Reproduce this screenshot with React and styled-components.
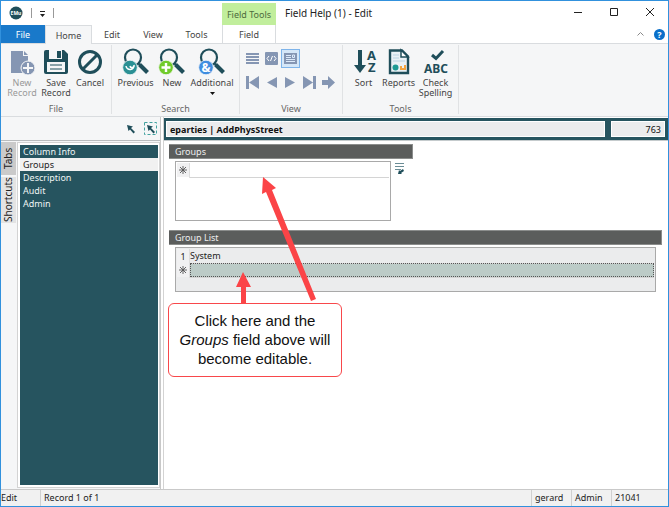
import styled, { createGlobalStyle } from "styled-components";

const INK = "#1f4e5a";
const TEAL = "#26545f";
const MUTED = "#8596b3";
const LINE = "#d9dcdf";

const GlobalStyle = createGlobalStyle`
  * {
    box-sizing: border-box;
  }
  body {
    margin: 0;
    font-family: "Noto Sans", "Open Sans", sans-serif;
    font-size: 9px;
    line-height: 11px;
    color: #444;
  }
  button,
  input {
    margin: 0;
    padding: 0;
    border: 0;
    background: none;
    font: inherit;
    color: inherit;
  }
  svg {
    display: block;
  }
`;

const Window = styled.div`
  display: flex;
  flex-direction: column;
  min-height: 100vh;
  border: 1px solid #3191dd;
  background: #fff;
`;

// Title bar
const TitleBar = styled.header`
  display: flex;
  height: 24px;
`;

const QuickAccess = styled.div`
  display: flex;
  align-items: center;
  gap: 8px;
  width: 221px;
  padding-left: 8px;
`;

const Divider = styled.span`
  width: 1px;
  height: 10px;
  background: #999;
`;

const ContextLabel = styled.div`
  width: 54px;
  margin-top: 2px;
  padding-top: 6px;
  background: #c1ee9c;
  text-align: center;
  color: #4d6b3c;
`;

const Title = styled.h1`
  flex: 1;
  margin: 0;
  padding: 6px 0 0 9px;
  font-size: 10px;
  line-height: 12px;
  font-weight: 400;
  color: #222;
`;

const WindowButton = styled.button`
  display: grid;
  place-items: center;
  width: 36px;
  height: 22px;
`;

// Ribbon tabs
const TabRow = styled.nav`
  display: flex;
  height: 19px;
  border-bottom: 1px solid ${LINE};
`;

const MainTabs = styled.div`
  display: flex;
  width: 221px;
`;

const Tab = styled.button`
  width: ${(p) => p.$width}px;
  height: ${(p) => (p.$active ? 19 : 18)}px;
  border: solid ${LINE};
  border-width: ${(p) => (p.$active ? "1px 1px 0" : p.$context ? "0 1px" : "0")};
  background: ${(p) => (p.$file ? "#1979ca" : p.$active ? "#f5f6f7" : "#fff")};
  color: ${(p) => (p.$file ? "#fff" : "#444")};
`;

const TabTools = styled.div`
  display: flex;
  flex: 1;
  align-items: center;
  justify-content: flex-end;
  gap: 10px;
  padding-right: 3px;
`;

const Ribbon = styled.div`
  display: flex;
  height: 73px;
  border-bottom: 1px solid ${LINE};
  background: #f5f6f7;
`;

const RibbonGroup = styled.section`
  display: flex;
  flex-direction: column;
  justify-content: space-between;
  width: ${(p) => p.$width}px;
  margin: 1px 0 2px;
  padding-top: 3px;
  border-right: 1px solid #e0e2e4;
`;

const GroupTools = styled.div`
  display: flex;
  justify-content: center;
`;

const GroupName = styled.h2`
  margin: 0;
  font-size: 9px;
  font-weight: 400;
  text-align: center;
  color: #666;
`;

const ToolButton = styled.button`
  display: flex;
  flex-direction: column;
  align-items: center;
  width: ${(p) => p.$width}px;
  line-height: 10px;
  color: ${(p) => (p.$disabled ? "#999" : "#444")};

  svg {
    flex: none;
    margin-bottom: 2px;
  }
`;

const ViewTools = styled.div`
  display: grid;
  gap: 5px;
  padding: 1px 0 0 3px;
`;

const ViewRow = styled.div`
  display: flex;
`;

const ViewButton = styled.button`
  display: grid;
  place-items: center;
  width: 19px;
  height: 19px;
  border: 1px solid ${(p) => (p.$on ? "#7eb4ea" : "transparent")};
  background: ${(p) => (p.$on ? "#d5e7f8" : "none")};
`;

// Body
const Body = styled.div`
  display: flex;
  flex: 1;
`;

const Sidebar = styled.aside`
  display: flex;
  flex-direction: column;
  width: 160px;
  border-right: 1px solid #c8c8c8;
  background: #f5f6f7;
`;

const SidebarTools = styled.div`
  display: flex;
  align-items: center;
  justify-content: flex-end;
  gap: 7px;
  height: 24px;
  padding-right: 3px;
  border-bottom: 1px solid #b9bcbe;
`;

const SidebarMain = styled.div`
  display: flex;
  flex: 1;
`;

const SideTabs = styled.div`
  width: 16px;
  padding-top: 1px;
`;

const SideTab = styled.button`
  width: 15px;
  height: ${(p) => p.$height}px;
  background: ${(p) => (p.$active ? "#cacaca" : "#e3e3e3")};
  color: #222;
  font-size: 10px;
  line-height: 15px;
  writing-mode: vertical-rl;
  transform: rotate(180deg);
`;

const PageFrame = styled.div`
  display: flex;
  flex: 1;
  margin: 1px 0;
  padding: 2px 1px 2px 2px;
  border: 1px solid #d3d3d3;
  background: #fff;
`;

const PageList = styled.div`
  flex: 1;
  background: ${TEAL};
`;

const PageItem = styled.button`
  display: block;
  width: 100%;
  height: 13px;
  padding-left: 3px;
  background: ${(p) => (p.$active ? "#f1f1f1" : "transparent")};
  color: ${(p) => (p.$active ? "#222" : "#eef4f5")};
  text-align: left;
`;

const Main = styled.main`
  position: relative;
  flex: 1;
  margin-left: 2px;
  border-left: 1px solid #d3d3d3;
`;

const RecordBar = styled.div`
  display: flex;
  gap: 6px;
  height: 23px;
  margin-top: 1px;
  padding: 3px 3px 3px 2px;
  border-bottom: 1px solid #c5cbcd;
  background: ${TEAL};
`;

const RecordField = styled.input`
  width: ${(p) => p.$width};
  min-width: 0;
  padding: 0 3px;
  border: 1px solid #fff;
  background: #ebeced;
  color: #111;
  font-weight: ${(p) => (p.$strong ? 700 : 400)};
  text-align: ${(p) => (p.$strong ? "left" : "right")};
`;

const Form = styled.div`
  padding: 3px 6px 0 5px;
`;

const Block = styled.section`
  margin-bottom: 9px;
`;

const BlockTitle = styled.h3`
  width: ${(p) => p.$width};
  margin: 0 0 2px;
  padding-left: 6px;
  border: 1px solid #8b8d8c;
  border-left: 0;
  background: #5b5d5c;
  color: #eee;
  font-size: 9px;
  font-weight: 400;
  line-height: 13px;
`;

const FieldRow = styled.div`
  display: flex;
  align-items: flex-start;
  gap: 4px;
  padding: 0 6px;
`;

const GridFrame = styled.div`
  width: ${(p) => p.$width};
  height: ${(p) => p.$height}px;
  padding: 1px;
  border: 1px solid #a9a9a9;
  background: ${(p) => (p.$locked ? "#ebeced" : "#fff")};
`;

const Grid = styled.table`
  width: 100%;
  border-collapse: collapse;

  th,
  td {
    height: 14px;
    padding: 0;
    color: #222;
    font-weight: 400;
  }
  th {
    width: 12px;
    border-right: 1px solid #ddd;
    background: #f1f1f2;
    text-align: center;
  }
  td {
    border-bottom: 1px solid #d4d4d4;
  }
  input {
    display: block;
    width: 100%;
    height: 12px;
    outline: none;
  }
`;

const PickedCell = styled.td`
  background: #bccbc7;
  outline: 1px dotted #555;
  outline-offset: -1px;
`;

const IconButton = styled.button`
  padding-top: 1px;
`;

const Arrows = styled.svg`
  position: absolute;
  top: 0;
  left: 0;
`;

const Callout = styled.p`
  position: absolute;
  top: 186px;
  left: 4px;
  width: 174px;
  margin: 0;
  padding: 7px 4px 8px;
  border: 1px solid #f8484b;
  border-radius: 6px;
  background: #fff;
  color: #111;
  font-family: "Liberation Sans", Arial, sans-serif;
  font-size: 15px;
  line-height: 19px;
  text-align: center;
`;

const StatusBar = styled.footer`
  display: flex;
  height: 17px;
  border-top: 1px solid #c9c9c9;
  background: #f1f1f1;
  color: #222;
  line-height: 16px;
`;

const StatusCell = styled.span`
  flex: ${(p) => (p.$width ? "none" : 1)};
  width: ${(p) => (p.$width ? p.$width + "px" : "auto")};
  padding-left: ${(p) => (p.$first ? 0 : 3)}px;
  border-left: ${(p) => (p.$first ? 0 : 1)}px solid #d0d0d0;
`;

// Icons
const Icon = ({ children }) => (
  <svg width="28" height="28" viewBox="0 0 28 28" fill="none" aria-hidden="true">
    {children}
  </svg>
);

const NewRecordIcon = () => (
  <Icon>
    <path d="M3 3h12v5h5v17H3z" fill={MUTED} />
    <path d="M16 3l4 4h-4z" fill={MUTED} />
    <circle cx="20" cy="20" r="7" fill={MUTED} stroke="#f5f6f7" />
    <path d="M20 15v10M15 20h10" stroke="#f5f6f7" strokeWidth="2" />
  </Icon>
);

const SaveIcon = () => (
  <Icon>
    <path d="M2 4q0-2 2-2h18l4 4v18q0 2-2 2H4q-2 0-2-2z" fill={INK} />
    <path d="M7 2h13v9H7z" fill="#f5f6f7" />
    <path d="M15 3h4v7h-4z" fill={INK} />
    <path d="M5 14h18v10H5z" fill="#f5f6f7" />
    <path d="M8 17h12M8 21h12" stroke={INK} />
  </Icon>
);

const CancelIcon = () => (
  <Icon>
    <circle cx="14" cy="14" r="10.5" stroke={INK} strokeWidth="3" />
    <path d="M7 21L21 7" stroke={INK} strokeWidth="3" />
  </Icon>
);

const SearchIcon = ({ badge, children }) => (
  <Icon>
    <circle cx="11" cy="9.500" r="8" stroke={INK} strokeWidth="2.200" />
    <path d="M16 15l2 2" stroke={INK} strokeWidth="2" />
    <path d="M17.500 16.500l8 8" stroke={INK} strokeWidth="4" />
    <circle cx="8" cy="19.500" r="7.300" fill={badge} stroke="#f5f6f7" strokeWidth=".8" />
    {children}
  </Icon>
);

const SortIcon = () => (
  <Icon>
    <path d="M8 2h4v15h4l-6 8-6-8h4z" fill={INK} />
    <text x="17" y="12" fontSize="13" fontWeight="700" fill={INK}>A</text>
    <text x="18" y="24" fontSize="13" fontWeight="700" fill={INK}>Z</text>
  </Icon>
);

const ReportsIcon = () => (
  <Icon>
    <path d="M5 2.500h12l6 6V25H5z" fill="#e9f1f5" stroke={INK} strokeWidth="2.400" />
    <path d="M16 2v7h7z" fill="#fff" stroke={INK} strokeWidth="1.500" />
    <path d="M8 7h6M8 10h6M8 13h12" stroke="#b9d3e2" />
    <circle cx="10.500" cy="19.500" r="3" fill="#1c9a94" />
    <path d="M15 22v-4h2v2h2v-3h2v5z" fill="#f2a440" />
  </Icon>
);

const SpellIcon = () => (
  <Icon>
    <path d="M10 7l4 3.500L21 3" stroke={INK} strokeWidth="3" />
    <text x="14" y="25" fontSize="12" fontWeight="700" textAnchor="middle" fill={INK}>ABC</text>
  </Icon>
);

const SmallIcon = ({ d, children }) => (
  <svg width="13" height="13" viewBox="0 0 13 13" fill={MUTED} aria-hidden="true">
    {d && <path d={d} />}
    {children}
  </svg>
);

const viewModes = [
  { label: "List", d: "M0 1h13v2H0zM0 4h13v2H0zM0 7h13v2H0zM0 10h13v2H0z" },
  { label: "Code", code: true },
  { label: "Page", page: true, on: true },
];

const moves = [
  { label: "First", d: "M0 0h3v13H0zM13 0v13L3 6.500z" },
  { label: "Previous record", d: "M12 1v11L2 6.500z" },
  { label: "Next record", d: "M1 1v11l10-5.500z" },
  { label: "Last", d: "M0 0v13l10-6.500zM10 0h3v13h-3z" },
  { label: "Go to", d: "M0 4h6V0l7 6.500L6 13V9H0z" },
];

const pages = ["Column Info", "Groups", "Description", "Audit", "Admin"];

const Star = () => (
  <svg width="12" height="8" viewBox="0 0 12 8" stroke="#555" strokeWidth=".9" aria-hidden="true">
    <path d="M6 0v8M2 4h8M3 1l6 6M9 1L3 7" />
  </svg>
);

export default function App() {
  return (
    <>
      <GlobalStyle />
      <Window>
        <TitleBar>
          <QuickAccess>
            <svg width="14" height="14" viewBox="0 0 14 14" aria-hidden="true">
              <circle cx="7" cy="7" r="6.500" fill={INK} />
              <text x="7" y="9" fontSize="5" fontWeight="700" textAnchor="middle" fill="#fff">EMu</text>
            </svg>
            <Divider />
            <IconButton aria-label="Customize quick access">
              <svg width="5" height="6" viewBox="0 0 5 6" fill="#222">
                <path d="M0 0h5v1H0zM0 3h5L2.500 6z" />
              </svg>
            </IconButton>
            <Divider />
          </QuickAccess>
          <ContextLabel>Field Tools</ContextLabel>
          <Title>Field Help (1) - Edit</Title>
          <WindowButton aria-label="Minimize">
            <svg width="8" height="8"><path d="M0 4.500h8" stroke="#222" /></svg>
          </WindowButton>
          <WindowButton aria-label="Maximize">
            <svg width="8" height="8"><path d="M.5.5h7v7h-7z" fill="none" stroke="#222" /></svg>
          </WindowButton>
          <WindowButton aria-label="Close">
            <svg width="8" height="8"><path d="M0 0l8 8M8 0L0 8" stroke="#222" /></svg>
          </WindowButton>
        </TitleBar>

        <TabRow>
          <MainTabs>
            <Tab $width={44} $file>File</Tab>
            <Tab $width={47} $active>Home</Tab>
            <Tab $width={40}>Edit</Tab>
            <Tab $width={42}>View</Tab>
            <Tab $width={45}>Tools</Tab>
          </MainTabs>
          <Tab $width={54} $context>Field</Tab>
          <TabTools>
            <button aria-label="Collapse ribbon">
              <svg width="7" height="4"><path d="M.5 3.500l3-3 3 3" fill="none" stroke="#888" /></svg>
            </button>
            <button aria-label="Help">
              <svg width="11" height="11" viewBox="0 0 11 11">
                <circle cx="5.500" cy="5.500" r="5.500" fill="#0a6fc9" />
                <text x="5.500" y="9" fontSize="9" fontWeight="700" textAnchor="middle" fill="#fff">?</text>
              </svg>
            </button>
          </TabTools>
        </TabRow>

        <Ribbon>
          <RibbonGroup $width={111}>
            <GroupTools>
              <ToolButton $width={34} $disabled>
                <NewRecordIcon />
                New<br />Record
              </ToolButton>
              <ToolButton $width={34}>
                <SaveIcon />
                Save<br />Record
              </ToolButton>
              <ToolButton $width={34}>
                <CancelIcon />
                Cancel
              </ToolButton>
            </GroupTools>
            <GroupName>File</GroupName>
          </RibbonGroup>
          <RibbonGroup $width={128}>
            <GroupTools>
              <ToolButton $width={39}>
                <SearchIcon badge="#2a9094">
                  <path d="M4 18a4 4 0 1 0 8-1M12 17a2 2 0 0 1-4 1" stroke="#fff" strokeWidth="1.500" />
                </SearchIcon>
                Previous
              </ToolButton>
              <ToolButton $width={34}>
                <SearchIcon badge="#71cb2b">
                  <path d="M8 15v9M3.500 19.500h9" stroke="#fff" strokeWidth="2.400" />
                </SearchIcon>
                New
              </ToolButton>
              <ToolButton $width={46}>
                <SearchIcon badge="#3f8de0">
                  <text x="8" y="24" fontSize="12" fontWeight="700" textAnchor="middle" fill="#fff">&amp;</text>
                </SearchIcon>
                Additional
                <svg width="5" height="7"><path d="M0 4h5L2.500 7z" fill="#111" /></svg>
              </ToolButton>
            </GroupTools>
            <GroupName>Search</GroupName>
          </RibbonGroup>
          <RibbonGroup $width={103}>
            <ViewTools>
              <ViewRow>
                {viewModes.map((m) => (
                  <ViewButton key={m.label} aria-label={m.label} $on={m.on}>
                    <SmallIcon d={m.d}>
                      {m.code && (
                        <>
                          <rect width="13" height="13" rx="1" />
                          <path d="M4 4L2 6.500 4 9M9 4l2 2.500L9 9M7.500 4l-2 5" fill="none" stroke="#fff" />
                        </>
                      )}
                      {m.page && (
                        <>
                          <rect y="1" width="13" height="11" />
                          <path d="M2 3.500h5M2 5.500h5M2 7.500h9M2 9.500h9M8.500 3h2v2.500h-2z" fill="none" stroke="#dceafa" />
                        </>
                      )}
                    </SmallIcon>
                  </ViewButton>
                ))}
              </ViewRow>
              <ViewRow>
                {moves.map((m) => (
                  <ViewButton key={m.label} aria-label={m.label}>
                    <SmallIcon d={m.d} />
                  </ViewButton>
                ))}
              </ViewRow>
            </ViewTools>
            <GroupName>View</GroupName>
          </RibbonGroup>
          <RibbonGroup $width={116}>
            <GroupTools>
              <ToolButton $width={34}>
                <SortIcon />
                Sort
              </ToolButton>
              <ToolButton $width={36}>
                <ReportsIcon />
                Reports
              </ToolButton>
              <ToolButton $width={38}>
                <SpellIcon />
                Check<br />Spelling
              </ToolButton>
            </GroupTools>
            <GroupName>Tools</GroupName>
          </RibbonGroup>
        </Ribbon>

        <Body>
          <Sidebar>
            <SidebarTools>
              <button aria-label="Select">
                <svg width="13" height="13" viewBox="0 0 13 13">
                  <path d="M3 3l6 1.500-2 1.500 4 4-1.500 1.500-3.500-4L4.500 9z" fill={INK} />
                </svg>
              </button>
              <button aria-label="Select area">
                <svg width="13" height="13" viewBox="0 0 13 13">
                  <rect x=".5" y=".5" width="12" height="12" fill="none" stroke="#43a3a0" strokeDasharray="3 2" />
                  <path d="M3 3l6 1.500-2 1.500 4 4-1.500 1.500-3.500-4L4.500 9z" fill={INK} />
                </svg>
              </button>
            </SidebarTools>
            <SidebarMain>
              <SideTabs>
                <SideTab $height={33} $active>Tabs</SideTab>
                <SideTab $height={46}>Shortcuts</SideTab>
              </SideTabs>
              <PageFrame>
                <PageList>
                  {pages.map((name) => (
                    <PageItem key={name} $active={name === "Groups"}>{name}</PageItem>
                  ))}
                </PageList>
              </PageFrame>
            </SidebarMain>
          </Sidebar>

          <Main>
            <RecordBar>
              <RecordField $width="100%" $strong readOnly aria-label="Field" value="eparties | AddPhysStreet" />
              <RecordField $width="60px" readOnly aria-label="Record number" value="763" />
            </RecordBar>
            <Form>
              <Block>
                <BlockTitle $width="244px">Groups</BlockTitle>
                <FieldRow>
                  <GridFrame $width="216px" $height={60}>
                    <Grid>
                      <tbody>
                        <tr>
                          <th scope="row"><Star /></th>
                          <td><input aria-label="Groups" /></td>
                        </tr>
                      </tbody>
                    </Grid>
                  </GridFrame>
                  <IconButton aria-label="Lookup">
                    <svg width="10" height="13" viewBox="0 0 10 13" fill="none">
                      <path d="M0 1.500h9M0 4.500h9M0 7.500h6" stroke="#6a8c95" />
                      <path d="M3 12l1-4 1 1 3-2 1 2-3 2 1 1z" fill={INK} />
                    </svg>
                  </IconButton>
                </FieldRow>
              </Block>
              <Block>
                <BlockTitle $width="100%">Group List</BlockTitle>
                <FieldRow>
                  <GridFrame $width="100%" $height={45} $locked>
                    <Grid>
                      <tbody>
                        <tr>
                          <th scope="row">1</th>
                          <td>System</td>
                        </tr>
                        <tr>
                          <th scope="row"><Star /></th>
                          <PickedCell><input aria-label="New group" /></PickedCell>
                        </tr>
                      </tbody>
                    </Grid>
                  </GridFrame>
                </FieldRow>
              </Block>
            </Form>
            <Arrows width="180" height="190" viewBox="0 0 180 190" fill="#fb4447" aria-hidden="true">
              <path d="M99 60L98 77l4-2 45 109 5-2-44-109 4-2z" />
              <path d="M79 155l-7 15h5v17h5v-17h5z" />
            </Arrows>
            <Callout>
              Click here and the <em>Groups</em> field above will become editable.
            </Callout>
          </Main>
        </Body>

        <StatusBar>
          <StatusCell $width={39} $first>Edit</StatusCell>
          <StatusCell>Record 1 of 1</StatusCell>
          <StatusCell $width={40}>gerard</StatusCell>
          <StatusCell $width={40}>Admin</StatusCell>
          <StatusCell $width={57}>21041</StatusCell>
        </StatusBar>
      </Window>
    </>
  );
}
